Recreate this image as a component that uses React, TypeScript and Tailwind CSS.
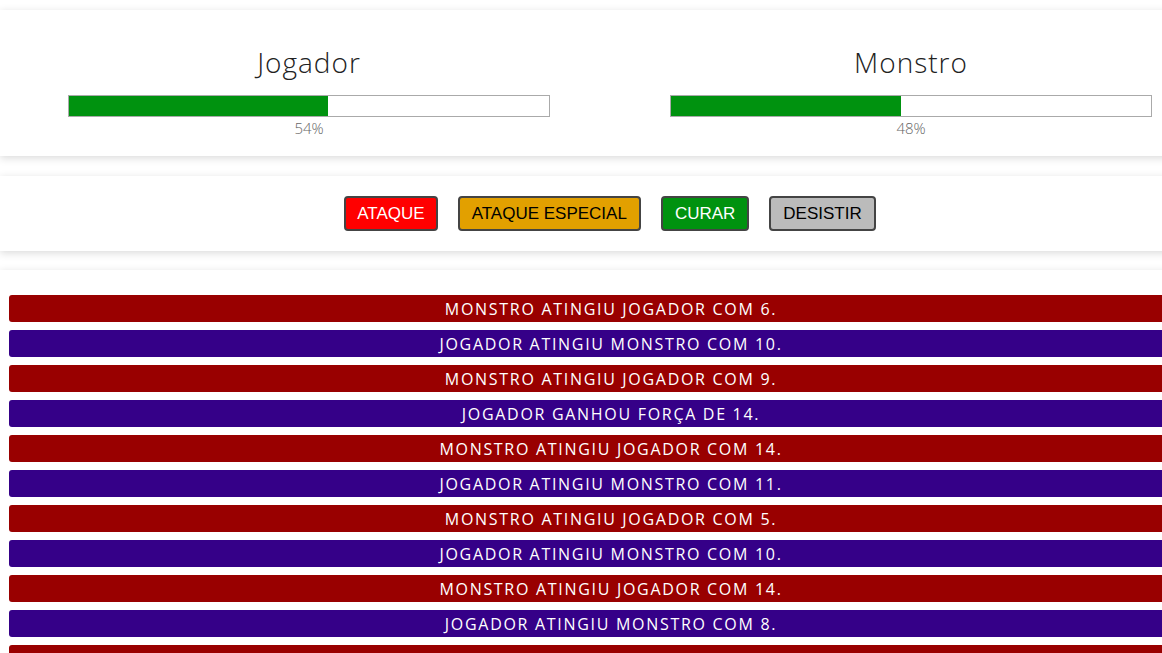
import React from "react";

const logs: { who: "m" | "p"; text: string }[] = [
  { who: "m", text: "Monstro atingiu jogador com 6." },
  { who: "p", text: "Jogador atingiu monstro com 10." },
  { who: "m", text: "Monstro atingiu jogador com 9." },
  { who: "p", text: "Jogador ganhou força de 14." },
  { who: "m", text: "Monstro atingiu jogador com 14." },
  { who: "p", text: "Jogador atingiu monstro com 11." },
  { who: "m", text: "Monstro atingiu jogador com 5." },
  { who: "p", text: "Jogador atingiu monstro com 10." },
  { who: "m", text: "Monstro atingiu jogador com 14." },
  { who: "p", text: "Jogador atingiu monstro com 8." },
  { who: "m", text: "Monstro atingiu jogador com 17." },
];

function Health({ name, pct }: { name: string; pct: number }) {
  return (
    <div className="w-[482px] flex flex-col items-center">
      <div className="text-[28px] leading-[34px] font-light tracking-[1px] text-[#222] mb-[16px]" style={{ fontFamily: '"Open Sans", Lato, sans-serif' }}>
        {name}
      </div>
      <div className="w-full h-[22px] border border-[#aaa] bg-white">
        <div className="h-full bg-[#00920f]" style={{ width: `${pct}%` }} />
      </div>
      <div className="text-[15px] leading-[20px] font-light text-[#666] mt-[1px]" style={{ fontFamily: '"Open Sans", Lato, sans-serif' }}>
        {pct}%
      </div>
    </div>
  );
}

export default function App() {
  return (
    <div className="w-full h-[653px] overflow-hidden bg-white">
      <div className="w-[1220px] pt-[10px]">
        <section className="bg-white shadow-[0_2px_8px_rgba(0,0,0,0.15)] h-[146px] pt-[35px]">
          <div className="flex gap-[120px] ml-[68px]">
            <Health name="Jogador" pct={54} />
            <Health name="Monstro" pct={48} />
          </div>
        </section>
        <section className="bg-white shadow-[0_2px_8px_rgba(0,0,0,0.15)] mt-[20px] h-[75px] flex items-center justify-center gap-[20px]" style={{ fontFamily: '"Liberation Sans", Arial, sans-serif' }}>
          <button className="h-[35px] px-[11px] bg-[#ff0000] text-white text-[17px] border-2 border-[#444] rounded-[4px]">ATAQUE</button>
          <button className="h-[35px] px-[12px] bg-[#e2a000] text-black text-[17px] border-2 border-[#444] rounded-[4px]">ATAQUE ESPECIAL</button>
          <button className="h-[35px] px-[12px] bg-[#00920f] text-white text-[17px] border-2 border-[#444] rounded-[4px]">CURAR</button>
          <button className="h-[35px] px-[12px] bg-[#bbbbbb] text-black text-[17px] border-2 border-[#444] rounded-[4px]">DESISTIR</button>
        </section>
        <section className="bg-white shadow-[0_2px_8px_rgba(0,0,0,0.15)] mt-[19px] pt-[25px] pb-[20px]">
          <ul className="flex flex-col gap-[8px] ml-[9px] w-[1204px]" style={{ fontFamily: '"Open Sans", Lato, sans-serif' }}>
            {logs.map((l, i) => (
              <li
                key={i}
                className={`h-[27px] rounded-[3px] flex items-center justify-center uppercase text-white text-[16px] tracking-[1.7px] ${l.who === "m" ? "bg-[#990000]" : "bg-[#350088]"}`}
              >
                {l.text}
              </li>
            ))}
          </ul>
        </section>
      </div>
    </div>
  );
}
